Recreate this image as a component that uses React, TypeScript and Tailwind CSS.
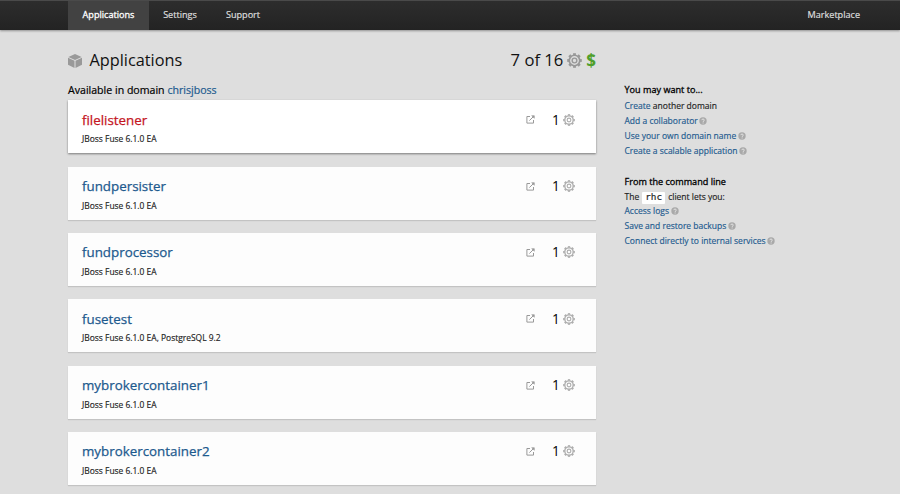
import React from "react";

type App = { name: string; detail: string; hot?: boolean };

const apps: App[] = [
  { name: "filelistener", detail: "JBoss Fuse 6.1.0 EA", hot: true },
  { name: "fundpersister", detail: "JBoss Fuse 6.1.0 EA" },
  { name: "fundprocessor", detail: "JBoss Fuse 6.1.0 EA" },
  { name: "fusetest", detail: "JBoss Fuse 6.1.0 EA, PostgreSQL 9.2" },
  { name: "mybrokercontainer1", detail: "JBoss Fuse 6.1.0 EA" },
  { name: "mybrokercontainer2", detail: "JBoss Fuse 6.1.0 EA" },
];

const teeth = [0, 45, 90, 135, 180, 225, 270, 315];

function Gear({ className }: { className: string }) {
  return (
    <svg viewBox="0 0 16 16" className={className} fill="none" stroke="currentColor">
      <circle cx="8" cy="8" r="5.6" strokeWidth="1.8" />
      <circle cx="8" cy="8" r="2.5" strokeWidth="1.5" />
      {teeth.map((a) => (
        <path key={a} d="M6.5 1.2h3" strokeWidth="2" transform={`rotate(${a} 8 8)`} />
      ))}
    </svg>
  );
}

function Cube() {
  return (
    <svg viewBox="0 0 14 14" className="h-[14px] w-[14px] text-[#999]" fill="currentColor">
      <path d="M7 0 13.6 2.9 7 5.9 0.4 2.9Z" />
      <path d="M0 3.8 6.5 6.8V14L0 10.8Z" />
      <path d="M14 3.8 7.5 6.8V14L14 10.8Z" />
    </svg>
  );
}

function External() {
  return (
    <svg viewBox="0 0 9 9" className="h-[9px] w-[9px] text-[#999]" fill="none" stroke="currentColor">
      <path d="M4 1.5H.9V8.1H7.5V5" />
      <path d="M3.4 5.6 7.2 1.8" />
      <path d="M5.7.7H8.3V3.3Z" fill="currentColor" strokeWidth=".6" />
    </svg>
  );
}

function Help() {
  return (
    <svg viewBox="0 0 8 8" className="mb-px ml-[1.5px] h-[8px] w-[8px] shrink-0">
      <circle cx="4" cy="4" r="3.7" fill="#a9a9a9" />
      <path d="M2.8 3.1C2.8 1.6 5.3 1.7 5.3 3.1 5.3 3.9 4.1 3.9 4.1 4.9M4.1 5.5v1" fill="none" stroke="#e8e8e8" strokeWidth=".9" />
    </svg>
  );
}

function HelpLink({ children }: { children: React.ReactNode }) {
  return (
    <li className="flex h-[15px] items-center">
      <a className="text-[#1d5a8e]">{children}</a>
      <Help />
    </li>
  );
}

function AppCard({ app }: { app: App }) {
  return (
    <li
      className={
        app.hot
          ? "flex h-[53px] justify-between bg-white pl-[14px] pr-[21px] shadow-[0_1px_2px_rgba(0,0,0,0.45)]"
          : "flex h-[53px] justify-between bg-[#fdfdfd] pl-[14px] pr-[21px] shadow-[0_1px_1px_rgba(0,0,0,0.12)]"
      }
    >
      <div className="pt-[9.5px]">
        <h2
          className={
            app.hot
              ? "text-[13.35px] leading-[20px] text-[#c4161f] [-webkit-text-stroke:0.25px]"
              : "text-[13.35px] leading-[20px] text-[#1d5a8e] [-webkit-text-stroke:0.25px]"
          }
        >
          {app.name}
        </h2>
        <p className="mt-[3.5px] text-[8.45px] leading-[12px] text-[#222] [-webkit-text-stroke:0.15px]">{app.detail}</p>
      </div>
      <div className="flex h-[39px] items-center">
        <External />
        <span className="ml-[17px] w-[8px] text-[13.6px] text-black">1</span>
        <Gear className="ml-[3px] h-[12px] w-[12px] text-[#aeaeae]" />
      </div>
    </li>
  );
}

export default function Page() {
  return (
    <div className="h-[495px] overflow-hidden bg-white font-['Open_Sans',sans-serif]">
      <div className="h-[494px] overflow-hidden bg-[#dedede]">
        <header className="flex h-[30px] justify-between border-t border-[#4a4a4a] bg-linear-to-b from-[#2d2d2d] to-[#232323] pl-[68px] pr-[40px] text-[9.1px] text-[#ddd] shadow-[0_1px_2px_rgba(0,0,0,0.35)] [-webkit-text-stroke:0.2px]">
          <nav className="flex">
            <a className="flex w-[81px] items-center justify-center bg-[#424242] pb-[2px] text-white [-webkit-text-stroke:0.3px]">
              Applications
            </a>
            <a className="flex w-[62px] items-center justify-center pb-[2px]">Settings</a>
            <a className="flex w-[64px] items-center justify-center pb-[2px]">Support</a>
          </nav>
          <a className="flex items-center pb-[2px]">Marketplace</a>
        </header>
        <div className="flex pl-[68px]">
          <main className="w-[528px]">
            <div className="mt-[18px] flex h-[25px] items-center justify-between text-[16.3px] text-[#111]">
              <h1 className="flex items-center gap-[7.5px]">
                <Cube />
                Applications
              </h1>
              <div className="flex items-center">
                <span className="text-[16.6px]">7 of 16</span>
                <Gear className="ml-[4px] h-[15px] w-[15px] text-[#999]" />
                <span className="ml-[4px] text-[17px] font-bold leading-none text-[#4f9f2b]">$</span>
              </div>
            </div>
            <p className="mt-[9px] h-[18.4px] text-[10.6px] leading-[16px] text-black [-webkit-text-stroke:0.2px]">
              Available in domain <a className="text-[#1d5a8e]">chrisjboss</a>
            </p>
            <ul className="flex flex-col gap-[13.3px]">
              {apps.map((a) => (
                <AppCard key={a.name} app={a} />
              ))}
            </ul>
          </main>
          <aside className="ml-[28.5px] pt-[52px] text-[8.5px] text-[#222] [-webkit-text-stroke:0.15px]">
            <h3 className="h-[17px] text-[9.1px] leading-[16px] text-black [-webkit-text-stroke:0.3px]">You may want to...</h3>
            <ul>
              <li className="flex h-[15px] items-center whitespace-pre">
                <a className="text-[#1d5a8e]">Create</a> another domain
              </li>
              <HelpLink>Add a collaborator</HelpLink>
              <HelpLink>Use your own domain name</HelpLink>
              <HelpLink>Create a scalable application</HelpLink>
            </ul>
            <h3 className="mt-[14.5px] h-[16.5px] text-[9.1px] leading-[16px] text-black [-webkit-text-stroke:0.3px]">
              From the command line
            </h3>
            <p className="flex h-[15px] items-center">
              The
              <code className="mx-[3px] flex h-[12px] w-[23px] items-center justify-center rounded-[1px] bg-white font-['DejaVu_Sans_Mono',monospace] text-[9.4px]">
                rhc
              </code>
              client lets you:
            </p>
            <ul className="-mt-[1px]">
              <HelpLink>Access logs</HelpLink>
              <HelpLink>Save and restore backups</HelpLink>
              <HelpLink>Connect directly to internal services</HelpLink>
            </ul>
          </aside>
        </div>
      </div>
    </div>
  );
}
